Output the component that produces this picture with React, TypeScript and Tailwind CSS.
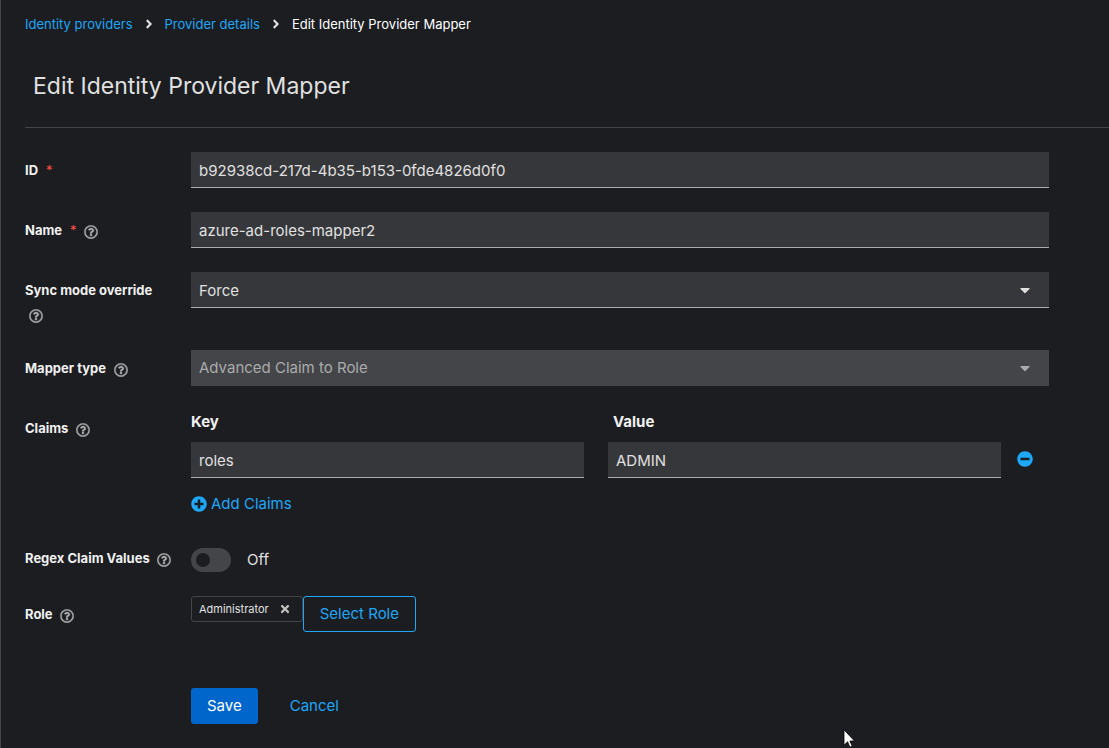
import { useState, type ReactNode } from "react";
import {
  FaAngleRight,
  FaCaretDown,
  FaMinusCircle,
  FaPlusCircle,
  FaRegQuestionCircle,
  FaTimes,
} from "react-icons/fa";

const inputClass =
  "block h-9 w-full border-b border-[#aaabac] bg-[#36373a] px-2 pt-0.5 text-[15px] text-[#e0e0e0] outline-none";

function HelpButton({ topic }: { topic: string }) {
  return (
    <button type="button" aria-label={`Help for ${topic}`} className="pt-0.5 pr-0.5 pl-1 align-middle text-[#aaabac]">
      <FaRegQuestionCircle className="size-3.5" stroke="currentColor" strokeWidth={12} />
    </button>
  );
}

type RowProps = {
  label: string;
  htmlFor: string;
  required?: boolean;
  help?: boolean;
  flush?: boolean;
  children: ReactNode;
};

function FormRow({ label, htmlFor, required, help = true, flush, children }: RowProps) {
  return (
    <div className="grid grid-cols-[150px_minmax(0,1fr)] gap-4">
      <div className={flush ? "text-[13px] leading-6" : "pt-1.5 text-[13px] leading-6"}>
        <label htmlFor={htmlFor} className="font-bold text-[#f0f0f0]">
          {label}
          {required && (
            <span aria-hidden="true" className="ml-2 font-normal text-[#fe5142]">
              *
            </span>
          )}
        </label>{" "}
        {help && <HelpButton topic={label} />}
      </div>
      <div>{children}</div>
    </div>
  );
}

function Crumbs() {
  return (
    <nav aria-label="Breadcrumb" className="pt-3">
      <ol className="flex items-center gap-3 text-[13px] leading-6">
        <li>
          <a href="#providers" className="text-[#1fa7f8]">Identity providers</a>
        </li>
        <FaAngleRight aria-hidden="true" className="-mx-[3px] size-3.5 text-[#e0e0e0]" />
        <li>
          <a href="#details" className="text-[#1fa7f8]">Provider details</a>
        </li>
        <FaAngleRight aria-hidden="true" className="-mx-[3px] size-3.5 text-[#e0e0e0]" />
        <li aria-current="page" className="text-white">Edit Identity Provider Mapper</li>
      </ol>
    </nav>
  );
}

export default function App() {
  const [regex, setRegex] = useState(false);

  return (
    <div className="relative min-h-screen overflow-hidden border-l border-[#444548] bg-[#1b1d21] pl-6 font-[Inter,sans-serif] text-[15px] leading-6 text-[#e0e0e0]">
      <Crumbs />
      <h1 className="border-b border-[#444548] px-2 pt-8 pb-[23px] text-[23px] leading-9">Edit Identity Provider Mapper</h1>

      <form className="flex flex-col gap-6 pt-6 pr-15 pb-6" onSubmit={(e) => e.preventDefault()}>
        <FormRow label="ID" htmlFor="mapper-id" required help={false}>
          <input id="mapper-id" readOnly className={inputClass} value="b92938cd-217d-4b35-b153-0fde4826d0f0" />
        </FormRow>

        <FormRow label="Name" htmlFor="mapper-name" required>
          <input id="mapper-name" className={inputClass} defaultValue="azure-ad-roles-mapper2" />
        </FormRow>

        <FormRow label="Sync mode override" htmlFor="sync-mode">
          <div className="relative">
            <select id="sync-mode" className={`${inputClass} appearance-none`}>
              <option>Force</option>
              <option>Inherit</option>
              <option>Import</option>
            </select>
            <FaCaretDown aria-hidden="true" className="pointer-events-none absolute top-2.5 right-4 size-4" />
          </div>
        </FormRow>

        <FormRow label="Mapper type" htmlFor="mapper-type">
          <div className="relative">
            <select
              id="mapper-type"
              disabled
              className="block h-9 w-full appearance-none bg-[#444548] px-2 text-[15px] text-[#aaabac] opacity-100"
            >
              <option>Advanced Claim to Role</option>
            </select>
            <FaCaretDown
              aria-hidden="true"
              className="pointer-events-none absolute top-2.5 right-4 size-4 text-[#aaabac]"
            />
          </div>
        </FormRow>

        <FormRow label="Claims" htmlFor="claim-key">
          <div className="flex items-end">
            <div className="grid flex-1 grid-cols-2 gap-x-6 gap-y-2">
              <span id="key-heading" className="font-bold text-[#f0f0f0]">Key</span>
              <span id="value-heading" className="pl-[5px] font-bold text-[#f0f0f0]">Value</span>
              <input id="claim-key" aria-labelledby="key-heading" className={inputClass} defaultValue="roles" />
              <input aria-labelledby="value-heading" className={inputClass} defaultValue="ADMIN" />
            </div>
            <button type="button" aria-label="Remove claim" className="flex h-9 w-12 items-center justify-center pb-0.5 text-[#1fa7f8]">
              <FaMinusCircle className="size-4" />
            </button>
          </div>
          <button type="button" className="mt-2 flex h-9 items-center gap-1 text-[#1fa7f8]">
            <FaPlusCircle className="size-4" />
            Add Claims
          </button>
        </FormRow>

        <FormRow label="Regex Claim Values" htmlFor="regex-values" flush>
          <div className="flex items-center gap-4 pt-0.5">
            <input
              id="regex-values"
              type="checkbox"
              role="switch"
              checked={regex}
              onChange={(e) => setRegex(e.target.checked)}
              className="flex h-6 w-10 appearance-none items-center rounded-full bg-[#444548] px-[5px] before:size-3.5 before:rounded-full before:bg-[#1b1d21] checked:justify-end checked:bg-[#0066cc]"
            />
            <span>{regex ? "On" : "Off"}</span>
          </div>
        </FormRow>

        <FormRow label="Role" htmlFor="select-role">
          <div className="flex items-start">
            <span className="flex h-[26px] items-center rounded-[3px] border border-[#444548] pl-[7px] text-[11px]">
              Administrator
              <button type="button" aria-label="Remove Administrator" className="pr-[11px] pl-2.5 text-[#c0c0c0]">
                <FaTimes className="size-3" />
              </button>
            </span>
            <button id="select-role" type="button" className="h-9 rounded-[3px] border border-[#1fa7f8] px-4 text-[#1fa7f8]">
              Select Role
            </button>
          </div>
        </FormRow>

        <div className="mt-8 flex gap-4 pl-[166px]">
          <button type="submit" className="h-9 rounded-[3px] bg-[#0066cc] px-4 text-white">Save</button>
          <button type="button" className="h-9 px-4 text-[#1fa7f8]">Cancel</button>
        </div>
      </form>

      <svg
        aria-hidden="true"
        viewBox="0 0 12 19"
        className="pointer-events-none absolute top-[729px] left-[842px] h-[19px] w-3"
      >
        <path
          d="M1 .8v15.4l3.6-3.4 2.3 5.4 2.3-1-2.3-5.2h4.6z"
          fill="#fff"
          stroke="#000"
          strokeWidth="0.8"
        />
      </svg>
    </div>
  );
}
